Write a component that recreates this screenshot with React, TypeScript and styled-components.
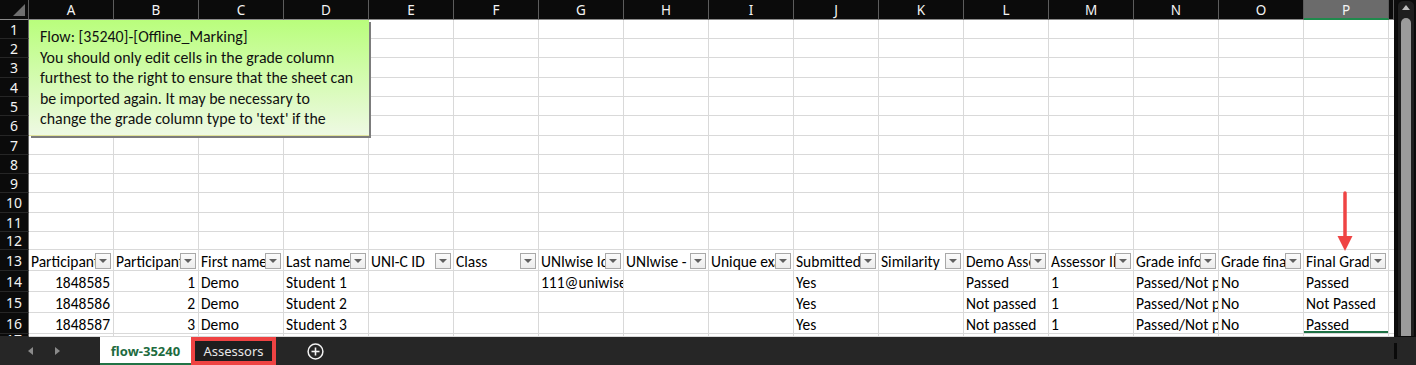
import React from 'react';
import styled, { createGlobalStyle, css } from 'styled-components';

const GlobalStyle = createGlobalStyle`
  html, body { margin: 0; padding: 0; background: #262626; overflow: hidden; }
  #root { width: 1416px; height: 365px; }
  * { box-sizing: border-box; }
`;

const COLS = 'ABCDEFGHIJKLMNOP'.split('');
const ROW_HEIGHTS = [19, 19, 20, 19, 19, 20, 19, 19, 19, 20, 19, 18, 21, 21, 21, 21];

const HEADERS = [
  'Participant ID', 'Participant no.', 'First name', 'Last name', 'UNI-C ID', 'Class',
  'UNIwise Id', 'UNIwise - username', 'Unique exam ID', 'Submitted', 'Similarity',
  'Demo Assessment', 'Assessor ID', 'Grade information', 'Grade final', 'Final Grade',
];

type Row = string[];
const DATA: Row[] = [
  ['1848585', '1', 'Demo', 'Student 1', '', '', '111@uniwise.dk', '', '', 'Yes', '', 'Passed', '1', 'Passed/Not passed', 'No', 'Passed'],
  ['1848586', '2', 'Demo', 'Student 2', '', '', '', '', '', 'Yes', '', 'Not passed', '1', 'Passed/Not passed', 'No', 'Not Passed'],
  ['1848587', '3', 'Demo', 'Student 3', '', '', '', '', '', 'Yes', '', 'Not passed', '1', 'Passed/Not passed', 'No', 'Passed'],
];
const NUMERIC_COLS = [0, 1];

const CELL_FONT = `"Carlito", "Lato", "Noto Sans", sans-serif`;
const UI_FONT = `"Segoe UI", "Noto Sans", "Open Sans", sans-serif`;

const Window = styled.div`
  width: 1416px;
  height: 365px;
  display: grid;
  grid-template-rows: 337px 28px;
  background: #262626;
  overflow: hidden;
`;

const Main = styled.div`
  display: flex;
  min-height: 0;
`;

const Sheet = styled.div`
  position: relative;
  flex: 0 0 1394px;
  display: grid;
  grid-template-columns: 29px repeat(16, 85px) 5px;
  grid-template-rows: 20px ${ROW_HEIGHTS.map((h) => `${h}px`).join(' ')} 1fr;
  background: #ffffff;
  overflow: hidden;
`;

const Corner = styled.div`
  position: relative;
  background: #0b0b0b;
  border-right: 1px solid #5c5c5c;
  border-bottom: 1px solid #8a8a8a;
  &::after {
    content: '';
    position: absolute;
    right: 3px;
    bottom: 3px;
    border-left: 12px solid transparent;
    border-bottom: 12px solid #6f6f6f;
  }
`;

const ColHeader = styled.div<{ $selected?: boolean }>`
  background: ${(p) => (p.$selected ? '#6b6b6b' : '#0b0b0b')};
  border-right: 1px solid #5c5c5c;
  border-bottom: ${(p) => (p.$selected ? '2px solid #1f8a4c' : '1px solid #8a8a8a')};
  color: #f4f4f4;
  font-family: ${UI_FONT};
  font-size: 13.5px;
  display: flex;
  align-items: center;
  justify-content: center;
  padding-top: 1px;
`;

const RowHeader = styled.div`
  background: #0b0b0b;
  border-right: 1px solid #6a6a6a;
  border-bottom: 1px solid #262626;
  color: #f4f4f4;
  font-family: ${UI_FONT};
  font-size: 14px;
  display: flex;
  align-items: center;
  justify-content: center;
  overflow: hidden;
`;

const RowHeaderPartial = styled(RowHeader)`
  align-items: flex-start;
  line-height: 12px;
`;

const Cell = styled.div<{ $num?: boolean; $active?: boolean }>`
  border-right: 1px solid #d9d9d9;
  border-bottom: 1px solid #d9d9d9;
  font-family: ${CELL_FONT};
  font-size: 15.5px;
  line-height: 16px;
  color: #000;
  white-space: nowrap;
  overflow: hidden;
  display: flex;
  align-items: flex-end;
  padding: 0 3px 0 2px;
  justify-content: ${(p) => (p.$num ? 'flex-end' : 'flex-start')};
  ${(p) =>
    p.$active &&
    css`
      box-shadow: inset 0 -2px 0 #1e7145;
    `}
`;

const FilterCell = styled(Cell)`
  align-items: center;
  padding: 0 2px 0 2px;
`;

const FilterLabel = styled.span`
  flex: 1;
  min-width: 0;
  overflow: hidden;
  white-space: nowrap;
  line-height: 18px;
  padding-top: 4px;
`;

const FilterButton = styled.span`
  flex: 0 0 16px;
  height: 16px;
  margin-top: 1px;
  border: 1px solid #a8a8a8;
  background: linear-gradient(#fbfbfb, #ececec);
  display: flex;
  align-items: center;
  justify-content: center;
  &::after {
    content: '';
    border-left: 4px solid transparent;
    border-right: 4px solid transparent;
    border-top: 4px solid #606060;
  }
`;

const Comment = styled.div`
  position: absolute;
  left: 29px;
  top: 20px;
  width: 340px;
  height: 116px;
  background: linear-gradient(#b9fe7c, #eef9e3);
  border-bottom: 1px solid #e0e39a;
  box-shadow: 2px 2px 0 #7c7c7c;
  padding: 7px 10px 0 11px;
  font-family: ${CELL_FONT};
  font-size: 15.9px;
  line-height: 20.5px;
  color: #111;
  overflow: hidden;
`;

const CommentLine = styled.div`
  white-space: nowrap;
`;

const Arrow = styled.svg`
  position: absolute;
  left: 1336px;
  top: 190px;
`;

const VScroll = styled.div`
  flex: 1;
  background: #0c0c0c;
  display: flex;
  justify-content: flex-end;
  padding-right: 1px;
`;

const Track = styled.div`
  width: 18px;
  background: #1f1f1f;
  border: 1px solid #0a0a0a;
  border-radius: 6px 6px 0 0;
  display: flex;
  flex-direction: column;
  align-items: center;
  padding-top: 4px;
`;

const UpArrow = styled.span`
  border-left: 4px solid transparent;
  border-right: 4px solid transparent;
  border-bottom: 5px solid #bdbdbd;
`;

const Thumb = styled.div`
  width: 10px;
  flex: 1;
  margin-top: 8px;
  background: #9b9b9b;
  border-radius: 5px 5px 0 0;
`;

const TabBar = styled.div`
  display: flex;
  align-items: stretch;
  background: #262626;
`;

const NavArea = styled.div`
  width: 100px;
  display: flex;
  align-items: center;
  padding-left: 28px;
  gap: 22px;
`;

const NavArrow = styled.span<{ $dir: 'left' | 'right' }>`
  width: 0;
  height: 0;
  border-top: 4px solid transparent;
  border-bottom: 4px solid transparent;
  ${(p) =>
    p.$dir === 'left'
      ? css`border-right: 5px solid #8a8a8a;`
      : css`border-left: 5px solid #8a8a8a;`}
`;

const ActiveTab = styled.div`
  width: 91px;
  background: #ffffff;
  border-bottom: 2px solid #217346;
  color: #1d6b40;
  font-family: ${UI_FONT};
  font-weight: 700;
  font-size: 13px;
  display: flex;
  align-items: center;
  justify-content: center;
  padding-top: 1px;
`;

const HighlightedTab = styled.div`
  width: 85px;
  background: #1e1e1e;
  border: 4px solid #ef4343;
  color: #e6e6e6;
  font-family: ${UI_FONT};
  font-size: 13px;
  display: flex;
  align-items: center;
  justify-content: center;
`;

const AddSheet = styled.div`
  margin-left: 31px;
  display: flex;
  align-items: center;
`;

const Splitter = styled.div`
  margin-left: auto;
  margin-right: 19px;
  align-self: center;
  width: 3px;
  height: 16px;
  background: #0a0a0a;
`;

export default function App() {
  const cells: React.ReactNode[] = [];
  cells.push(<Corner key="corner" />);
  COLS.forEach((c) => (
    cells.push(<ColHeader key={`h${c}`} $selected={c === 'P'}>{c}</ColHeader>)
  ));
  cells.push(<ColHeader key="hQ" />);

  for (let r = 1; r <= 16; r++) {
    cells.push(<RowHeader key={`r${r}`}>{r}</RowHeader>);
    for (let ci = 0; ci < 16; ci++) {
      const key = `c${r}-${ci}`;
      if (r === 13) {
        cells.push(
          <FilterCell key={key}>
            <FilterLabel>{HEADERS[ci]}</FilterLabel>
            <FilterButton />
          </FilterCell>
        );
      } else if (r >= 14) {
        const v = DATA[r - 14][ci];
        cells.push(
          <Cell key={key} $num={NUMERIC_COLS.includes(ci)} $active={r === 16 && ci === 15}>
            {v}
          </Cell>
        );
      } else {
        cells.push(<Cell key={key} />);
      }
    }
    cells.push(<Cell key={`q${r}`} />);
  }
  cells.push(<RowHeaderPartial key="r17">17</RowHeaderPartial>);
  for (let ci = 0; ci < 17; ci++) cells.push(<Cell key={`c17-${ci}`} />);

  return (
    <>
      <GlobalStyle />
      <Window>
        <Main>
          <Sheet>
            {cells}
            <Comment>
              <CommentLine>Flow: [35240]-[Offline_Marking]</CommentLine>
              <CommentLine>You should only edit cells in the grade column</CommentLine>
              <CommentLine>furthest to the right to ensure that the sheet can</CommentLine>
              <CommentLine>be imported again. It may be necessary to</CommentLine>
              <CommentLine>change the grade column type to 'text' if the</CommentLine>
            </Comment>
            <Arrow width="18" height="62" viewBox="0 0 18 62">
              <line x1="9" y1="3" x2="9" y2="48" stroke="#ef4444" strokeWidth="3.5" strokeLinecap="round" />
              <polygon points="1.5,46 16.5,46 9,61" fill="#ef4444" />
            </Arrow>
          </Sheet>
          <VScroll>
            <Track>
              <UpArrow />
              <Thumb />
            </Track>
          </VScroll>
        </Main>
        <TabBar>
          <NavArea>
            <NavArrow $dir="left" />
            <NavArrow $dir="right" />
          </NavArea>
          <ActiveTab>flow-35240</ActiveTab>
          <HighlightedTab>Assessors</HighlightedTab>
          <AddSheet>
            <svg width="17" height="17" viewBox="0 0 17 17">
              <circle cx="8.5" cy="8.5" r="7.4" fill="none" stroke="#f2f2f2" strokeWidth="1.5" />
              <line x1="8.5" y1="4.5" x2="8.5" y2="12.5" stroke="#f2f2f2" strokeWidth="1.6" />
              <line x1="4.5" y1="8.5" x2="12.5" y2="8.5" stroke="#f2f2f2" strokeWidth="1.6" />
            </svg>
          </AddSheet>
          <Splitter />
        </TabBar>
      </Window>
    </>
  );
}
